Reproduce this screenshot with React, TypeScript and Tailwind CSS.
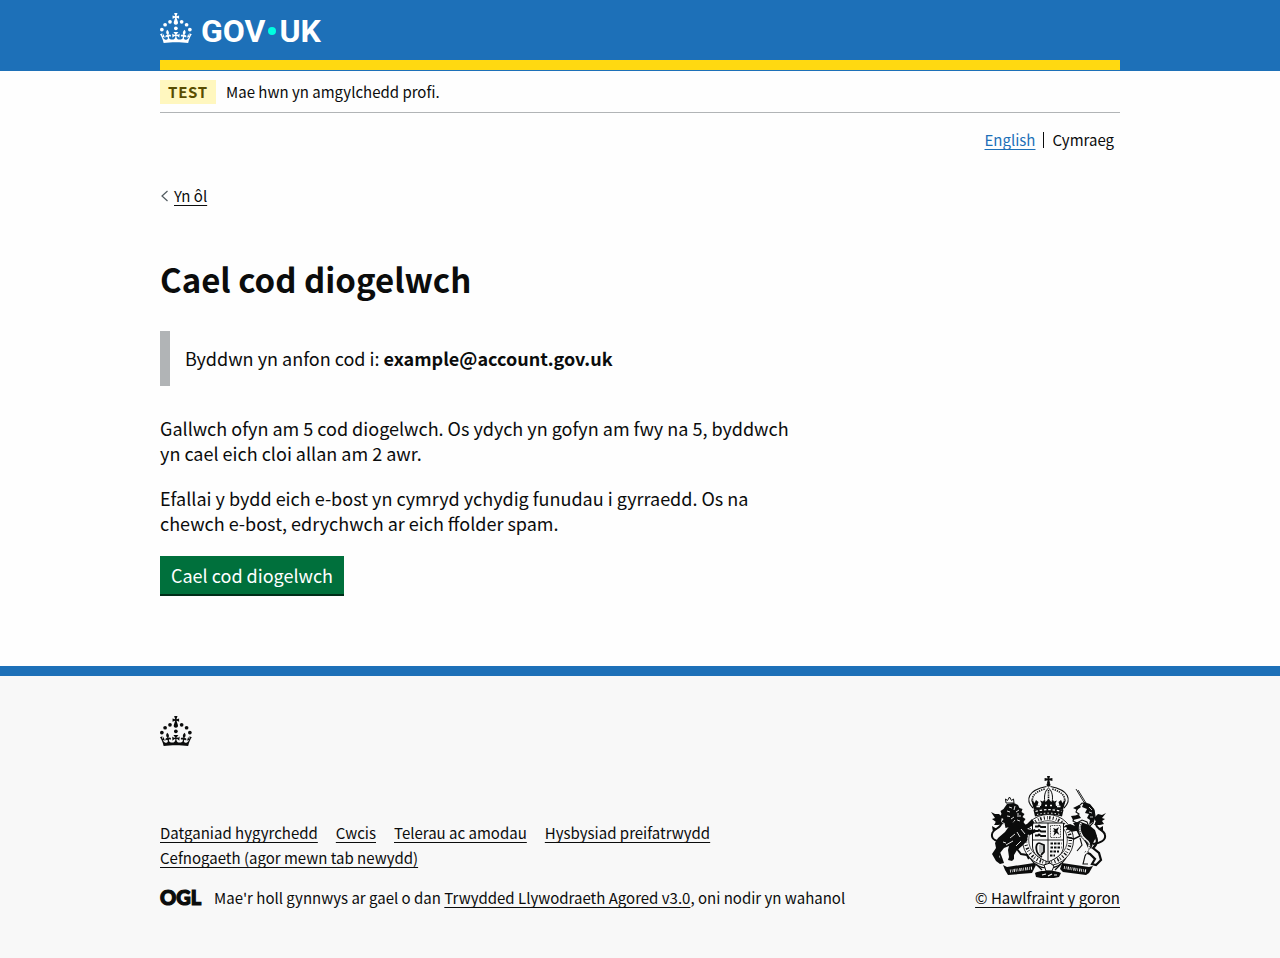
import type { ReactNode } from 'react';

function Crown() {
  return (
    <>
      <circle cx="20" cy="17.6" r="3.7" />
      <circle cx="10.2" cy="23.5" r="3.7" />
      <circle cx="3.7" cy="33.2" r="3.7" />
      <circle cx="31.7" cy="30.6" r="3.7" />
      <circle cx="43.3" cy="17.6" r="3.7" />
      <circle cx="53.2" cy="23.5" r="3.7" />
      <circle cx="59.7" cy="33.2" r="3.7" />
      <path d="M33.1,9.8c.2-.1.3-.3.5-.5l4.6,2.4v-6.8l-4.6,1.5c-.1-.2-.3-.3-.5-.5l1.9-5.9h-6.7l1.9,5.9c-.2.1-.3.3-.5.5l-4.6-1.5v6.8l4.6-2.4c.1.2.3.3.5.5l-2.6,8c-.9,2.8,1.2,5.7,4.1,5.7h0c3,0,5.1-2.9,4.1-5.7l-2.6-8ZM37,37.9s-3.4,3.8-4.1,6.1c2.2,0,4.2-.5,6.4-2.8l-.7,8.5c-2-2.8-4.4-4.1-5.7-3.8.1,3.1.5,6.7,5.8,7.2,3.7.3,6.7-1.5,7-3.8.4-2.6-2-4.3-3.7-1.6-1.4-4.5,2.4-6.1,4.9-3.2-1.9-4.5-1.8-7.7,2.4-10.9,3,4,2.6,7.3-1.2,11.1,2.4-1.3,6.2,0,4,4.6-1.2-2.8-3.7-2.2-4.2.2-.3,1.7.7,3.7,3,4.2,1.9.3,4.7-.9,7-5.9-1.3,0-2.4.7-3.9,1.7l2.4-8c.6,2.3,1.4,3.7,2.2,4.5.6-1.6.5-2.8,0-5.3l5,1.8c-2.6,3.6-5.2,8.7-7.3,17.5-7.4-1.1-15.7-1.7-24.5-1.7h0c-8.8,0-17.1.6-24.5,1.7-2.1-8.9-4.7-13.9-7.3-17.5l5-1.8c-.5,2.5-.6,3.7,0,5.3.8-.8,1.6-2.3,2.2-4.5l2.4,8c-1.5-1-2.6-1.7-3.9-1.7,2.3,5,5.2,6.2,7,5.9,2.3-.4,3.3-2.4,3-4.2-.5-2.4-3-3.1-4.2-.2-2.2-4.6,1.6-6,4-4.6-3.7-3.7-4.2-7.1-1.2-11.1,4.2,3.2,4.3,6.4,2.4,10.9,2.5-2.8,6.3-1.3,4.9,3.2-1.8-2.7-4.1-1-3.7,1.6.3,2.3,3.3,4.1,7,3.8,5.4-.5,5.7-4.2,5.8-7.2-1.3-.2-3.7,1-5.7,3.8l-.7-8.5c2.2,2.3,4.2,2.7,6.4,2.8-.7-2.3-4.1-6.1-4.1-6.1h10.6,0Z" />
    </>
  );
}

function RoyalArms() {
  return (
    <svg viewBox="0 0 125 102" className="h-[102px] w-[125px]" fill="#0b0c0c" stroke="#0b0c0c" aria-hidden="true">
      {/* crown */}
      <g>
        <path d="M62 0h3l-.6 2.6 3-.7v3l-3-.6.6 2.7h-3l.6-2.7-3 .6v-3l3 .7z" stroke="none" />
        <circle cx="63.5" cy="8.8" r="2" stroke="none" />
        <path d="M48 32C40 24 43 14 61.500 10.500M79 32c8-8 5-18-13.500-21.500" fill="none" strokeWidth="1.100" />
        <path d="M50 30C44 22 49 16 60 13M77 30c6-8 1-14-10-17" fill="none" strokeWidth="1.600" strokeDasharray="1.300 1" />
        <path d="M60.500 28c-2-6-1-13 3-16 4 3 5 10 3 16" fill="none" strokeWidth="1" />
        <path d="M63.500 14v12" strokeWidth="1.600" strokeDasharray="1.400 .8" />
        <path d="M46 23l3.500 4 1.500-3 2.500 2-1 3.500 3.500.5.500-3-1.500-2.500 3 1 1-1.500 1.500 2 3-3 3 3 1.500-2 1 1.500 3-1-1.500 2.500.5 3 3.500-.5-1-3.500 2.500-2 1.500 3 3.500-4-3 11c-9-2.500-20-2.500-29 0z" stroke="none" />
        <path d="M48.500 34c9-3 21-3 30 0l-1.500 6.500c-8-2.500-19-2.500-27 0z" stroke="none" />
        <path d="M50.500 35.500c8-2.500 18-2.500 26 0" fill="none" stroke="#f8f8f8" strokeWidth="1.300" strokeDasharray="2.500 1.800" />
        <path d="M52 38.500c7-1.800 16-1.800 23 0" fill="none" stroke="#f8f8f8" strokeWidth=".9" strokeDasharray="1.500 2" />
        <path d="M51.500 30.500h3.500m5-1h2m3 0h2m5 1h3.500" fill="none" stroke="#f8f8f8" strokeWidth="1.300" />
      </g>

      {/* garter and shield */}
      <circle cx="63" cy="64" r="25.500" fill="#f8f8f8" strokeWidth=".9" />
      <circle cx="63" cy="64" r="22.300" fill="none" strokeWidth="3.400" strokeDasharray="1 2.300 .7 1.500 1.400 2.200" />
      <circle cx="63" cy="64" r="19.300" fill="none" strokeWidth=".7" />
      <path d="M47.500 47h31v23c0 8-6 12-15.500 16-9.500-4-15.500-8-15.500-16z" fill="#f8f8f8" strokeWidth="1" />
      <path d="M63 47v38M48 64h30" fill="none" strokeWidth=".9" />
      <path d="M50 50.500h3l1-1 2 1.500h5M50 55h3l1-1 2 1.500h5M50 59.500h3l1-1 2 1.500h5" fill="none" strokeWidth="1.800" />
      <path d="M65.500 49.500h10v12h-10z" fill="none" strokeWidth=".8" strokeDasharray="1 .7" />
      <path d="M68 52l3 1 3-2-1.500 4 2 4-3-2-3 3 1-4-2-1 2-.5z" stroke="none" />
      <path d="M54 67c-4 1-4 11 3 14M54 67l5 2v7l-3 3" fill="none" strokeWidth="1.800" />
      <path d="M55 69v8m2-8v9" fill="none" strokeWidth=".5" />
      <path d="M65.500 67.500h11M65.500 71.500h11M65 75.500h9M65 79.500h5" fill="none" strokeWidth="2" strokeDasharray="2.500 1" />
      <path d="M45 82c5 8 12 10 17 10M81 82c-5 8-12 10-17 10" fill="none" strokeWidth="1.200" />
      <path d="M59 89l6-2 4 3-2 5-6 0z" fill="#f8f8f8" strokeWidth="1" />

      {/* lion */}
      <path d="M21 27l-.5-4 2 1.500L24.500 21l2 3.500 2-1.500.5 4z" fill="none" strokeWidth="1" />
      <path d="M22 28l7-1 4 2 1.500 3 3 1-1 3 3 2-2 3 3 2-2 3 2 3-1 3-6-2-4 3-5-2-4 1-1-5-3-1 2-3-4-2 2-3-1-3 3-2z" stroke="none" />
      <path d="M24 31l3 1m-5 3 3 1m-3 4 3 .5M30 30l-1 4m5 0-3 2m5 4-4 0m3 5-3-1m-6-1 3-2m-1 6 2-3m2-6 2 0" fill="none" stroke="#f8f8f8" strokeWidth=".9" />
      <path d="M37 47c4 2 6 6 6 11l-1 7-5 5-5 4-3 5 0 4-2 2-4-1 1-3-1-7 1-4-5 2-4 5-1 4 4 3 1 3-4 1-4-3-4-7 4-6-1-5 3-5 7-6 5-7 6-5z" stroke="none" />
      <path d="M33 51l9-3 5-5 2 3-1 3-6 4 5 1 3-1 1 3-6 3-6-1z" stroke="none" />
      <path d="M25 62l5-4m-9 11 7-4m3 5 5-5M36 53l4 5M32 56l3 5M18 66l3 1" fill="none" stroke="#f8f8f8" strokeWidth=".9" />
      <path d="M37 68l-5 5 4 5 6 1 2 4M14 76l3 8" fill="none" strokeWidth="2" />
      <path d="M17 65c-4 1-11-1-10-7 .7-5 9-6 9-10 0-3-3-3-5-1" fill="none" strokeWidth="2" />
      <path d="M6 36l4 2 4 0 3 3-1 5 3 2-6 1-4 0 2-3-4-3 3-1zM7 50l5 3-4 3z" stroke="none" />

      {/* unicorn */}
      <path d="M91 13l9 15M93 14l8 13" fill="none" strokeWidth=".9" />
      <path d="M97 27l7 2 5 5 1 6-2 7-4 4-2-5-5-2-5 3-4-2 1-3 5-4-3-2 2-5z" fill="#f8f8f8" strokeWidth="1.100" />
      <path d="M99 26l6 2 4 5 1 6-1 6-5 4 1-5-3-2 2-4-4-1 2-4-5-2z" stroke="none" />
      <path d="M88 32l6-3 2 2-4 3zM86 40l8-1 2 3-8 2z" stroke="none" />
      <path d="M104 31l3 3m-3 2 3 1m-2 4 3 0" fill="none" stroke="#f8f8f8" strokeWidth=".8" />
      <path d="M88 47l8-1 8 3 6 5 2 6-3 5-3 8-5-6-5-6-3-6-9-1-4-4 5-2 5 2z" stroke="none" />
      <path d="M82 52l5 3 5-1 3 6-6 3-7-2" fill="none" strokeWidth="1.600" />
      <path d="M109 59c4 3 4 9-1 13l6 5 2 7-5 5-4-1 3-5-5-5-5-2" fill="none" strokeWidth="2.200" />
      <path d="M101 66l3 7-4 7-2 8h5M95 62l2 7-5 6" fill="none" strokeWidth="1.100" />
      <path d="M96 47c-3 6 0 14 5 17s4 10-1 14" fill="none" stroke="#f8f8f8" strokeWidth="2" />
      <path d="M96 48c-3 6 0 14 5 17s4 10-1 14" fill="none" strokeWidth="1" strokeDasharray="1 .8" />
      <path d="M108 68c8-1 13-4 12-9-.7-5-9-6-9-11 0-3 3-3 5-1" fill="none" strokeWidth="2" />
      <path d="M121 37l-4 2-4-1-4 4 2 4-2 3 6 0 4-1-2-3 3-2-3-1zM118 50l-5 3 5 3z" stroke="none" />

      {/* motto ribbon */}
      <path d="M18 89l4 2 27-4 2 2-4 8-24 2-3-5z" stroke="none" />
      <path d="M77 87l27 4 4-1-4 7-3 2-23-3-3-3z" stroke="none" />
      <path d="M25 95l22-3M79 91.500l22 3.500" fill="none" stroke="#f8f8f8" strokeWidth="3" strokeDasharray=".8 1.100 .6 1.200 1.200 .9" />
      <path d="M50 97c4-3 21-3 26 0l-2 4-5 1h-13l-5-1z" stroke="none" />
      <path d="M57 99l4-1m2 2 4-2m2 1 3 0" fill="none" stroke="#f8f8f8" strokeWidth="1.200" />
      <path d="M51 88l6 6M76 88l-6 6" strokeWidth="1.300" />
    </svg>
  );
}

function Container({ children, className = '' }: { children: ReactNode; className?: string }) {
  return (
    <div className="px-8">
      <div className={`mx-auto max-w-[960px] ${className}`}>{children}</div>
    </div>
  );
}

function Link({ children }: { children: ReactNode }) {
  return (
    <a href="#" className="underline decoration-1 underline-offset-3 [text-decoration-skip-ink:none]">
      {children}
    </a>
  );
}

const footerLinks = [
  'Datganiad hygyrchedd',
  'Cwcis',
  'Telerau ac amodau',
  'Hysbysiad preifatrwydd',
  'Cefnogaeth (agor mewn tab newydd)',
];

export default function App() {
  return (
    <div className="flex min-h-screen flex-col bg-[#fefefe] font-['Noto_Sans_CJK_SC','Noto_Sans',sans-serif] text-[15px] leading-5 text-[#0b0c0c]">
      <header className="bg-[#1d70b8] pb-px text-white">
        <Container className="border-b-10 border-[#ffd911]">
          <div className="flex h-15 items-start pt-[13px]">
            <a href="#" aria-label="GOV.UK" className="flex items-start gap-[9px]">
              <svg viewBox="0 0 64 60" className="h-[30px] w-8" fill="currentColor" aria-hidden="true">
                <Crown />
              </svg>
              <span className="flex items-center font-['Roboto',sans-serif] text-[32px] leading-9 font-bold">
                GOV
                <span className="mx-[3px] size-2 rounded-full bg-[#00ffe0]" />
                UK
              </span>
            </a>
          </div>
        </Container>
      </header>

      <Container className="w-full">
        <div className="flex items-center gap-[10px] border-b border-[#b1b4b6] pt-[9px] pb-2">
          <strong className="bg-[#fff7bf] px-2 py-[2px] font-bold tracking-wider text-[#594d00]">TEST</strong>
          <span>Mae hwn yn amgylchedd profi.</span>
        </div>

        <nav aria-label="Dewis iaith" className="pt-[17px] pr-[6px]">
          <ul className="flex items-center justify-end">
            <li className="text-[#1d70b8]">
              <Link>English</Link>
            </li>
            <li className="ml-2 flex items-center gap-2">
              <span className="h-4 w-px bg-[#0b0c0c]" />
              Cymraeg
            </li>
          </ul>
        </nav>

        <div className="flex items-center gap-[5px] pt-9">
          <svg viewBox="0 0 9 12" className="h-3 w-[9px]" fill="none" stroke="#505a5f" strokeWidth="1.2" aria-hidden="true">
            <path d="M7.500 1L2 6l5.500 5" />
          </svg>
          <Link>Yn ôl</Link>
        </div>

        <main className="max-w-[630px] pt-[53px] pb-[70px] text-lg leading-[25px]">
          <h1 className="text-[33px] leading-10 font-bold">Cael cod diogelwch</h1>
          <div className="mt-8 border-l-10 border-[#b1b4b6] p-[15px]">
            Byddwn yn anfon cod i: <strong className="font-bold">example@account.gov.uk</strong>
          </div>
          <p className="mt-[30px]">
            Gallwch ofyn am 5 cod diogelwch. Os ydych yn gofyn am fwy na 5, byddwch yn cael eich cloi allan am 2 awr.
          </p>
          <p className="mt-5">
            Efallai y bydd eich e-bost yn cymryd ychydig funudau i gyrraedd. Os na chewch e-bost, edrychwch ar eich
            ffolder spam.
          </p>
          <button
            type="button"
            className="mt-5 flex h-10 items-center justify-center border-b-2 border-[#002d18] bg-[#00703c] px-[11px] text-white"
          >
            Cael cod diogelwch
          </button>
        </main>
      </Container>

      <footer className="grow border-t-10 border-[#1d70b8] bg-[#f8f8f8] pt-10 pb-10">
        <Container>
          <svg viewBox="0 0 64 60" className="h-[30px] w-8" fill="currentColor" aria-hidden="true">
            <Crown />
          </svg>
          <div className="mt-[30px] flex items-end justify-between">
            <div>
              <ul className="flex max-w-[600px] flex-wrap gap-x-[18px] leading-[25px]">
                {footerLinks.map((label) => (
                  <li key={label}>
                    <Link>{label}</Link>
                  </li>
                ))}
              </ul>
              <div className="mt-[18px] flex items-center gap-[13px]">
                <svg viewBox="0 0 41 17" className="h-[17px] w-[41px] overflow-visible" fill="#0b0c0c" stroke="#0b0c0c" strokeWidth="1.200">
                  <text x="0" y="15" className="font-['Lato',sans-serif] text-[20px] font-black">
                    OGL
                  </text>
                </svg>
                <span>
                  Mae'r holl gynnwys ar gael o dan <Link>Trwydded Llywodraeth Agored v3.0</Link>, oni nodir yn wahanol
                </span>
              </div>
            </div>
            <div className="flex flex-col items-center gap-[10px]">
              <RoyalArms />
              <Link>© Hawlfraint y goron</Link>
            </div>
          </div>
        </Container>
      </footer>
    </div>
  );
}
